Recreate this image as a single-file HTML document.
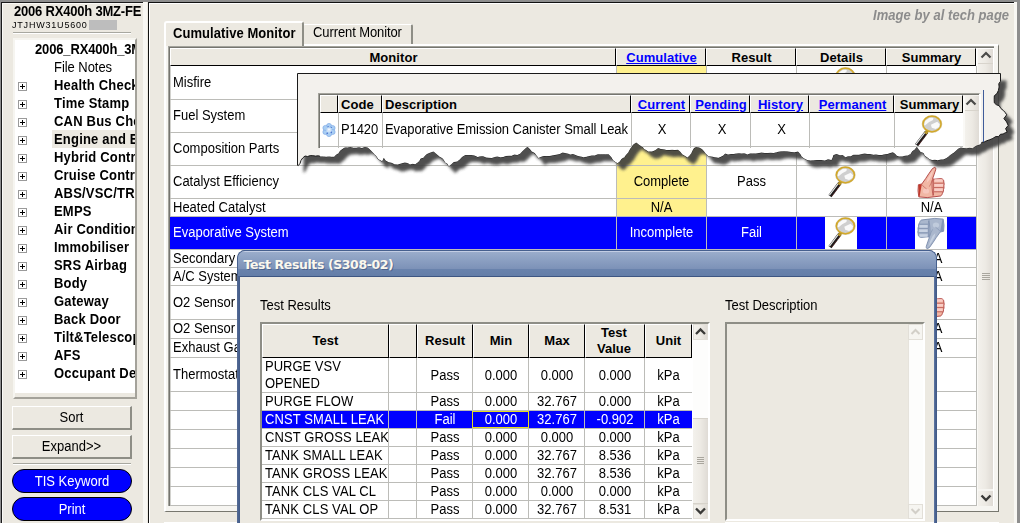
<!DOCTYPE html>
<html><head><meta charset="utf-8"><title>Test Results</title>
<style>
html,body{margin:0;padding:0;}
body{width:1020px;height:523px;overflow:hidden;position:relative;background:#ECE9E1;font-family:"Liberation Sans",sans-serif;font-size:13px;color:#000;}
div,span{box-sizing:border-box;}
.abs{position:absolute;}
svg{position:absolute;overflow:visible;}
.t{position:absolute;white-space:nowrap;line-height:15px;transform:scaleY(1.08);transform-origin:50% 80%;}
.s{display:inline-block;transform:scaleY(1.08);transform-origin:50% 80%;}
.hd .s{transform:none;}
.b{font-weight:bold;}
.w{color:#fff;}
.lnk{color:#0000FF;text-decoration:underline;font-weight:bold;}
.btn{position:absolute;background:#ECE9E1;border-top:1px solid #fff;border-left:1px solid #fff;border-right:2px solid #8E8E86;border-bottom:2px solid #8E8E86;text-align:center;line-height:21px;font-size:13px;}
.pill{position:absolute;background:#0000FF;border:1px solid #000;border-radius:13px;color:#fff;text-align:center;line-height:22px;padding-top:1px;font-size:13px;}
.hd{position:absolute;background:#ECE9E1;border-top:1px solid #fff;border-left:1px solid #fff;border-right:1px solid #000;border-bottom:1px solid #000;text-align:center;font-weight:bold;font-size:13px;line-height:15px;white-space:nowrap;overflow:hidden;letter-spacing:0.05px;}
.sb{position:absolute;background:linear-gradient(90deg,#F3F1EC 0%,#EDEAE4 50%,#DFDBD5 100%);}
</style></head><body>
<div class="abs" style="left:0px;top:0px;width:1020px;height:2px;background:#8E8E8E;"></div>
<div class="abs" style="left:0px;top:2px;width:1px;height:521px;background:#8E8E8E;"></div>
<div class="abs" style="left:1017px;top:0px;width:3px;height:523px;background:#8E8E8E;"></div>
<div class="abs" style="left:1px;top:2px;width:142px;height:521px;border-top:1px solid #1A1A1A;border-left:1px solid #1A1A1A;"></div>
<div class="abs" style="left:2px;top:3px;width:141px;height:520px;border-top:1px solid #FAF9F6;border-left:1px solid #FAF9F6;"></div>
<div class="abs" style="left:0;top:0;width:142px;height:523px;overflow:hidden;">
<div class="t" style="left:14px;top:4px;font-weight:bold;font-size:13px;line-height:16px;letter-spacing:-0.2px;">2006 RX400h 3MZ-FE</div>
<div class="t" style="left:12px;top:20px;font-size:9px;line-height:11px;letter-spacing:0.8px;">JTJHW31U5600</div>
<div class="abs" style="left:89px;top:20px;width:28px;height:10px;background:#BDBDBD;"></div>
<div class="abs" style="left:13px;top:32px;width:118px;height:1px;background:#A8A8A0;"></div>
<div class="abs" style="left:13px;top:33px;width:118px;height:1px;background:#fff;"></div>
<div class="abs" style="left:13px;top:38px;width:124px;height:361px;border-top:2px solid #F6F5F0;border-left:2px solid #F6F5F0;border-right:2px solid #A4A29A;border-bottom:2px solid #A4A29A;"></div>
<div class="abs" style="left:15px;top:40px;width:120px;height:353px;background:#fff;"></div>
<div class="abs" style="left:15px;top:40px;width:120px;height:353px;overflow:hidden;">
<div class="t" style="left:20px;top:2px;font-weight:bold;letter-spacing:-0.15px;">2006_RX400h_3MZ</div>
<div class="t" style="left:39px;top:20px;letter-spacing:-0.05px;">File Notes</div>
<div class="t" style="left:39px;top:38px;font-weight:bold;letter-spacing:0.2px;">Health Check</div>
<svg style="left:3px;top:42px;" width="9" height="9" viewBox="0 0 9 9"><rect x="0.5" y="0.5" width="8" height="8" fill="#fff" stroke="#9A9A9A"/><path d="M2 4.5H7M4.5 2V7" stroke="#000" stroke-width="1"/></svg>
<div class="t" style="left:39px;top:56px;font-weight:bold;letter-spacing:0.2px;">Time Stamp</div>
<svg style="left:3px;top:60px;" width="9" height="9" viewBox="0 0 9 9"><rect x="0.5" y="0.5" width="8" height="8" fill="#fff" stroke="#9A9A9A"/><path d="M2 4.5H7M4.5 2V7" stroke="#000" stroke-width="1"/></svg>
<div class="t" style="left:39px;top:74px;font-weight:bold;letter-spacing:0.2px;">CAN Bus Check</div>
<svg style="left:3px;top:78px;" width="9" height="9" viewBox="0 0 9 9"><rect x="0.5" y="0.5" width="8" height="8" fill="#fff" stroke="#9A9A9A"/><path d="M2 4.5H7M4.5 2V7" stroke="#000" stroke-width="1"/></svg>
<div class="abs" style="left:37px;top:90px;width:90px;height:18px;background:#ECE9E1;"></div>
<div class="t" style="left:39px;top:92px;font-weight:bold;letter-spacing:0.2px;">Engine and ECT</div>
<svg style="left:3px;top:96px;" width="9" height="9" viewBox="0 0 9 9"><rect x="0.5" y="0.5" width="8" height="8" fill="#fff" stroke="#9A9A9A"/><path d="M2 4.5H7M4.5 2V7" stroke="#000" stroke-width="1"/></svg>
<div class="t" style="left:39px;top:110px;font-weight:bold;letter-spacing:0.2px;">Hybrid Control</div>
<svg style="left:3px;top:114px;" width="9" height="9" viewBox="0 0 9 9"><rect x="0.5" y="0.5" width="8" height="8" fill="#fff" stroke="#9A9A9A"/><path d="M2 4.5H7M4.5 2V7" stroke="#000" stroke-width="1"/></svg>
<div class="t" style="left:39px;top:128px;font-weight:bold;letter-spacing:0.2px;">Cruise Control</div>
<svg style="left:3px;top:132px;" width="9" height="9" viewBox="0 0 9 9"><rect x="0.5" y="0.5" width="8" height="8" fill="#fff" stroke="#9A9A9A"/><path d="M2 4.5H7M4.5 2V7" stroke="#000" stroke-width="1"/></svg>
<div class="t" style="left:39px;top:146px;font-weight:bold;letter-spacing:0.2px;">ABS/VSC/TRAC</div>
<svg style="left:3px;top:150px;" width="9" height="9" viewBox="0 0 9 9"><rect x="0.5" y="0.5" width="8" height="8" fill="#fff" stroke="#9A9A9A"/><path d="M2 4.5H7M4.5 2V7" stroke="#000" stroke-width="1"/></svg>
<div class="t" style="left:39px;top:164px;font-weight:bold;letter-spacing:0.2px;">EMPS</div>
<svg style="left:3px;top:168px;" width="9" height="9" viewBox="0 0 9 9"><rect x="0.5" y="0.5" width="8" height="8" fill="#fff" stroke="#9A9A9A"/><path d="M2 4.5H7M4.5 2V7" stroke="#000" stroke-width="1"/></svg>
<div class="t" style="left:39px;top:182px;font-weight:bold;letter-spacing:0.2px;">Air Conditioner</div>
<svg style="left:3px;top:186px;" width="9" height="9" viewBox="0 0 9 9"><rect x="0.5" y="0.5" width="8" height="8" fill="#fff" stroke="#9A9A9A"/><path d="M2 4.5H7M4.5 2V7" stroke="#000" stroke-width="1"/></svg>
<div class="t" style="left:39px;top:200px;font-weight:bold;letter-spacing:0.2px;">Immobiliser</div>
<svg style="left:3px;top:204px;" width="9" height="9" viewBox="0 0 9 9"><rect x="0.5" y="0.5" width="8" height="8" fill="#fff" stroke="#9A9A9A"/><path d="M2 4.5H7M4.5 2V7" stroke="#000" stroke-width="1"/></svg>
<div class="t" style="left:39px;top:218px;font-weight:bold;letter-spacing:0.2px;">SRS Airbag</div>
<svg style="left:3px;top:222px;" width="9" height="9" viewBox="0 0 9 9"><rect x="0.5" y="0.5" width="8" height="8" fill="#fff" stroke="#9A9A9A"/><path d="M2 4.5H7M4.5 2V7" stroke="#000" stroke-width="1"/></svg>
<div class="t" style="left:39px;top:236px;font-weight:bold;letter-spacing:0.2px;">Body</div>
<svg style="left:3px;top:240px;" width="9" height="9" viewBox="0 0 9 9"><rect x="0.5" y="0.5" width="8" height="8" fill="#fff" stroke="#9A9A9A"/><path d="M2 4.5H7M4.5 2V7" stroke="#000" stroke-width="1"/></svg>
<div class="t" style="left:39px;top:254px;font-weight:bold;letter-spacing:0.2px;">Gateway</div>
<svg style="left:3px;top:258px;" width="9" height="9" viewBox="0 0 9 9"><rect x="0.5" y="0.5" width="8" height="8" fill="#fff" stroke="#9A9A9A"/><path d="M2 4.5H7M4.5 2V7" stroke="#000" stroke-width="1"/></svg>
<div class="t" style="left:39px;top:272px;font-weight:bold;letter-spacing:0.2px;">Back Door</div>
<svg style="left:3px;top:276px;" width="9" height="9" viewBox="0 0 9 9"><rect x="0.5" y="0.5" width="8" height="8" fill="#fff" stroke="#9A9A9A"/><path d="M2 4.5H7M4.5 2V7" stroke="#000" stroke-width="1"/></svg>
<div class="t" style="left:39px;top:290px;font-weight:bold;letter-spacing:0.2px;">Tilt&amp;Telescopic</div>
<svg style="left:3px;top:294px;" width="9" height="9" viewBox="0 0 9 9"><rect x="0.5" y="0.5" width="8" height="8" fill="#fff" stroke="#9A9A9A"/><path d="M2 4.5H7M4.5 2V7" stroke="#000" stroke-width="1"/></svg>
<div class="t" style="left:39px;top:308px;font-weight:bold;letter-spacing:0.2px;">AFS</div>
<svg style="left:3px;top:312px;" width="9" height="9" viewBox="0 0 9 9"><rect x="0.5" y="0.5" width="8" height="8" fill="#fff" stroke="#9A9A9A"/><path d="M2 4.5H7M4.5 2V7" stroke="#000" stroke-width="1"/></svg>
<div class="t" style="left:39px;top:326px;font-weight:bold;letter-spacing:0.2px;">Occupant Detection</div>
<svg style="left:3px;top:330px;" width="9" height="9" viewBox="0 0 9 9"><rect x="0.5" y="0.5" width="8" height="8" fill="#fff" stroke="#9A9A9A"/><path d="M2 4.5H7M4.5 2V7" stroke="#000" stroke-width="1"/></svg>
</div>
<div class="btn" style="left:12px;top:406px;width:120px;height:24px;"><span class="s">Sort</span></div>
<div class="btn" style="left:12px;top:435px;width:120px;height:24px;"><span class="s">Expand&gt;&gt;</span></div>
<div class="abs" style="left:13px;top:463px;width:118px;height:1px;background:#A8A8A0;"></div>
<div class="abs" style="left:13px;top:464px;width:118px;height:1px;background:#fff;"></div>
<div class="pill" style="left:12px;top:469px;width:120px;height:24px;"><span class="s">TIS Keyword</span></div>
<div class="pill" style="left:12px;top:497px;width:120px;height:24px;"><span class="s">Print</span></div>
</div>
<div class="abs" style="left:143px;top:2px;width:4px;height:521px;background:#F8F7F3;"></div>
<div class="abs" style="left:148px;top:2px;width:866px;height:521px;border-top:1px solid #111;border-left:1px solid #111;"></div>
<div class="abs" style="left:149px;top:3px;width:865px;height:520px;border-top:1px solid #fff;border-left:1px solid #fff;"></div>
<div class="abs" style="left:1014px;top:2px;width:3px;height:521px;background:#F8F7F3;"></div>
<div class="t" style="left:873px;top:8px;font-weight:bold;font-style:italic;color:#8C8C8C;letter-spacing:0.05px;">Image by al tech page</div>
<div class="abs" style="left:164px;top:44px;width:835px;height:468px;background:#F6F5F1;border-left:2px solid #fff;border-top:2px solid #fff;border-right:1px solid #77776F;border-bottom:1px solid #77776F;"></div>
<div class="abs" style="left:164px;top:522px;width:835px;height:1px;background:#fff;"></div>
<div class="abs" style="left:303px;top:24px;width:110px;height:20px;border-left:1px solid #fff;border-top:1px solid #fff;border-right:2px solid #8E8E86;border-radius:2px 2px 0 0;"></div>
<div class="t" style="left:313px;top:25px;letter-spacing:-0.1px;">Current Monitor</div>
<div class="abs" style="left:164px;top:21px;width:140px;height:25px;background:#ECE9E1;border-left:2px solid #fff;border-top:2px solid #fff;border-right:2px solid #8E8E86;border-radius:3px 3px 0 0;"></div>
<div class="t" style="left:173px;top:26px;font-weight:bold;letter-spacing:0.07px;">Cumulative Monitor</div>
<div class="abs" style="left:168px;top:46px;width:826px;height:460px;background:#fff;border-top:1px solid #A3A39C;border-left:1px solid #A3A39C;"></div>
<div class="abs" style="left:169px;top:47px;width:825px;height:459px;border-top:1px solid #75756F;border-left:1px solid #75756F;"></div>
<div class="hd" style="left:170px;top:48px;width:446px;height:18px;padding-left:1px;line-height:18px;"><span class="s">Monitor</span></div>
<div class="hd" style="left:616px;top:48px;width:90px;height:18px;padding-left:1px;line-height:18px;"><span class="s"><span class="lnk">Cumulative</span></span></div>
<div class="hd" style="left:706px;top:48px;width:90px;height:18px;padding-left:1px;line-height:18px;"><span class="s">Result</span></div>
<div class="hd" style="left:796px;top:48px;width:90px;height:18px;padding-left:1px;line-height:18px;"><span class="s">Details</span></div>
<div class="hd" style="left:886px;top:48px;width:90px;height:18px;padding-left:1px;line-height:18px;"><span class="s">Summary</span></div>
<div class="abs" style="left:170px;top:66px;width:1px;height:440px;background:#D2D2CE;"></div>
<div class="abs" style="left:617px;top:66px;width:89px;height:150px;background:#FFF18E;"></div>
<div class="abs" style="left:170px;top:217px;width:806px;height:32px;background:#0000FF;"></div>
<div class="t" style="left:173px;top:75px;">Misfire</div>
<div class="abs" style="left:170px;top:99px;width:806px;height:1px;background:#BCBCB8;"></div>
<div class="t" style="left:173px;top:108px;">Fuel System</div>
<div class="abs" style="left:170px;top:132px;width:806px;height:1px;background:#BCBCB8;"></div>
<div class="t" style="left:173px;top:141px;">Composition Parts</div>
<div class="abs" style="left:170px;top:165px;width:806px;height:1px;background:#BCBCB8;"></div>
<div class="t" style="left:173px;top:174px;">Catalyst Efficiency</div>
<div class="abs" style="left:170px;top:198px;width:806px;height:1px;background:#BCBCB8;"></div>
<div class="t" style="left:173px;top:200px;">Heated Catalyst</div>
<div class="abs" style="left:170px;top:216px;width:806px;height:1px;background:#BCBCB8;"></div>
<div class="t" style="left:173px;top:225px;color:#fff;">Evaporative System</div>
<div class="abs" style="left:170px;top:249px;width:806px;height:1px;background:#BCBCB8;"></div>
<div class="t" style="left:173px;top:251px;">Secondary Air</div>
<div class="abs" style="left:170px;top:267px;width:806px;height:1px;background:#BCBCB8;"></div>
<div class="t" style="left:173px;top:269px;">A/C System</div>
<div class="abs" style="left:170px;top:285px;width:806px;height:1px;background:#BCBCB8;"></div>
<div class="t" style="left:173px;top:295px;">O2 Sensor</div>
<div class="abs" style="left:170px;top:319px;width:806px;height:1px;background:#BCBCB8;"></div>
<div class="t" style="left:173px;top:321px;">O2 Sensor Heater</div>
<div class="abs" style="left:170px;top:338px;width:806px;height:1px;background:#BCBCB8;"></div>
<div class="t" style="left:173px;top:340px;">Exhaust Gas</div>
<div class="abs" style="left:170px;top:357px;width:806px;height:1px;background:#BCBCB8;"></div>
<div class="t" style="left:173px;top:367px;">Thermostat</div>
<div class="abs" style="left:170px;top:391px;width:806px;height:1px;background:#BCBCB8;"></div>
<div class="abs" style="left:170px;top:410px;width:806px;height:1px;background:#BCBCB8;"></div>
<div class="abs" style="left:170px;top:429px;width:806px;height:1px;background:#BCBCB8;"></div>
<div class="abs" style="left:170px;top:448px;width:806px;height:1px;background:#BCBCB8;"></div>
<div class="abs" style="left:170px;top:467px;width:806px;height:1px;background:#BCBCB8;"></div>
<div class="abs" style="left:170px;top:486px;width:806px;height:1px;background:#BCBCB8;"></div>
<div class="abs" style="left:170px;top:505px;width:806px;height:1px;background:#BCBCB8;"></div>
<div class="abs" style="left:616px;top:66px;width:1px;height:440px;background:#BCBCB8;"></div>
<div class="abs" style="left:706px;top:66px;width:1px;height:440px;background:#BCBCB8;"></div>
<div class="abs" style="left:796px;top:66px;width:1px;height:440px;background:#BCBCB8;"></div>
<div class="abs" style="left:886px;top:66px;width:1px;height:440px;background:#BCBCB8;"></div>
<div class="t" style="left:617px;top:174px;width:89px;text-align:center;">Complete</div>
<div class="t" style="left:707px;top:174px;width:89px;text-align:center;">Pass</div>
<div class="t" style="left:617px;top:200px;width:89px;text-align:center;">N/A</div>
<div class="t" style="left:887px;top:200px;width:89px;text-align:center;">N/A</div>
<div class="t" style="left:617px;top:225px;width:89px;text-align:center;color:#fff;">Incomplete</div>
<div class="t" style="left:707px;top:225px;width:89px;text-align:center;color:#fff;">Fail</div>
<div class="t" style="left:887px;top:251px;width:89px;text-align:center;">N/A</div>
<div class="t" style="left:887px;top:269px;width:89px;text-align:center;">N/A</div>
<div class="t" style="left:887px;top:321px;width:89px;text-align:center;">N/A</div>
<div class="t" style="left:887px;top:340px;width:89px;text-align:center;">N/A</div>
<div class="abs" style="left:825px;top:217px;width:32px;height:32px;background:#fff;"></div>
<div class="abs" style="left:915px;top:217px;width:32px;height:32px;background:#fff;"></div>
<svg style="left:0;top:0;" width="1020" height="523" viewBox="0 0 1020 523"><g transform="translate(845.4,175)"><line x1="-5.4" y1="7.8" x2="-15.4" y2="21.2" stroke="#1A1A1A" stroke-width="3.8" stroke-linecap="butt"/><line x1="-6.6" y1="7.8" x2="-16" y2="20.2" stroke="#E8E8E8" stroke-width="1.1"/><line x1="-5" y1="9.6" x2="-13.6" y2="21.2" stroke="#8C2A2A" stroke-width="0.8" stroke-dasharray="1 1.2"/><line x1="-4.4" y1="6.6" x2="-6.6" y2="9.6" stroke="#B8962A" stroke-width="3.2"/><ellipse cx="0" cy="0" rx="9" ry="7.7" fill="#CFCFCF" stroke="#D6AC2C" stroke-width="1.5"/><ellipse cx="0" cy="0" rx="9.8" ry="8.5" fill="none" stroke="#B08A1C" stroke-width="0.5" opacity="0.8"/><polygon points="-7.9,1.3 -7,-3 -2.4,-6.2 1.4,-6 1,-4 -3.2,-1.8 -6.8,1.3" fill="#FAFAFA"/><polygon points="-1.1,0.7 5.2,-2.2 7.7,0.3 7,3 3.7,5 -0.2,3.8" fill="#FAFAFA"/></g></svg>
<svg style="left:0;top:0;" width="1020" height="523" viewBox="0 0 1020 523"><g transform="translate(845.4,226)"><line x1="-5.4" y1="7.8" x2="-15.4" y2="21.2" stroke="#1A1A1A" stroke-width="3.8" stroke-linecap="butt"/><line x1="-6.6" y1="7.8" x2="-16" y2="20.2" stroke="#E8E8E8" stroke-width="1.1"/><line x1="-5" y1="9.6" x2="-13.6" y2="21.2" stroke="#8C2A2A" stroke-width="0.8" stroke-dasharray="1 1.2"/><line x1="-4.4" y1="6.6" x2="-6.6" y2="9.6" stroke="#B8962A" stroke-width="3.2"/><ellipse cx="0" cy="0" rx="9" ry="7.7" fill="#CFCFCF" stroke="#D6AC2C" stroke-width="1.5"/><ellipse cx="0" cy="0" rx="9.8" ry="8.5" fill="none" stroke="#B08A1C" stroke-width="0.5" opacity="0.8"/><polygon points="-7.9,1.3 -7,-3 -2.4,-6.2 1.4,-6 1,-4 -3.2,-1.8 -6.8,1.3" fill="#FAFAFA"/><polygon points="-1.1,0.7 5.2,-2.2 7.7,0.3 7,3 3.7,5 -0.2,3.8" fill="#FAFAFA"/></g></svg>
<svg style="left:0;top:0;" width="1020" height="523" viewBox="0 0 1020 523"><g transform="translate(845.4,76)"><line x1="-5.4" y1="7.8" x2="-15.4" y2="21.2" stroke="#1A1A1A" stroke-width="3.8" stroke-linecap="butt"/><line x1="-6.6" y1="7.8" x2="-16" y2="20.2" stroke="#E8E8E8" stroke-width="1.1"/><line x1="-5" y1="9.6" x2="-13.6" y2="21.2" stroke="#8C2A2A" stroke-width="0.8" stroke-dasharray="1 1.2"/><line x1="-4.4" y1="6.6" x2="-6.6" y2="9.6" stroke="#B8962A" stroke-width="3.2"/><ellipse cx="0" cy="0" rx="9" ry="7.7" fill="#CFCFCF" stroke="#D6AC2C" stroke-width="1.5"/><ellipse cx="0" cy="0" rx="9.8" ry="8.5" fill="none" stroke="#B08A1C" stroke-width="0.5" opacity="0.8"/><polygon points="-7.9,1.3 -7,-3 -2.4,-6.2 1.4,-6 1,-4 -3.2,-1.8 -6.8,1.3" fill="#FAFAFA"/><polygon points="-1.1,0.7 5.2,-2.2 7.7,0.3 7,3 3.7,5 -0.2,3.8" fill="#FAFAFA"/></g></svg>
<svg style="left:918px;top:167px;" width="26" height="31" viewBox="0 0 26 31"><g><path d="M16.8 0.3 C18 0.8 17.9 2 17.6 3 L16 7.8 L14.6 11.6 L16 12.2 L22.8 11.6 C25 11.8 26 13.2 25.8 15 C26.3 16.4 26.3 17.6 25.9 18.8 C26.2 20.2 26 21.6 25.5 22.6 C25.6 24.2 25.2 25.4 24.4 26.4 C24 27.8 23.4 28.6 22.6 29 L15.3 29.9 L9.2 30.6 L0.8 29.9 L0 23.7 L0.4 17.7 L3.8 17 L7.7 11.5 L10.7 6.9 L14.5 1.5 Z" fill="#F1B7A4" stroke="#A3282A" stroke-width="0.8" stroke-linejoin="round"/><path d="M0.6 18 L3.8 17.2 L1.6 29.6 L0.8 29.6 Z" fill="#C0392B"/><path d="M15.6 2.2 L12 7.6 L9.4 12 L8.6 16 L11.4 13 L13.4 9 Z" fill="#FACDC6" opacity="0.85"/><ellipse cx="8" cy="24" rx="3.2" ry="2.6" fill="#FACDC6" opacity="0.7"/><path d="M16.5 13.5 H24.5 M16.5 18.2 H25 M16.5 22.6 H24.6" stroke="#FACDC6" stroke-width="2.6" fill="none"/><path d="M16 16.2 H25.6 M16 20.6 H25.6 M16 24.8 H24.8 M14.8 12.2 C13.6 15 13.8 22 15.2 29.4 M15.4 12.4 L15.4 28" stroke="#A3282A" stroke-width="0.7" fill="none" opacity="0.85"/><path d="M3.8 17.4 C5.4 19.6 7 21 8.6 21.8 M14.4 12.4 C13.6 15 12.6 17.6 11.4 19.6" stroke="#A3282A" stroke-width="0.6" fill="none" opacity="0.7"/></g></svg>
<svg style="left:918px;top:218px;" width="26" height="31" viewBox="0 0 26 31"><g transform="translate(26,31) rotate(180)"><path d="M16.8 0.3 C18 0.8 17.9 2 17.6 3 L16 7.8 L14.6 11.6 L16 12.2 L22.8 11.6 C25 11.8 26 13.2 25.8 15 C26.3 16.4 26.3 17.6 25.9 18.8 C26.2 20.2 26 21.6 25.5 22.6 C25.6 24.2 25.2 25.4 24.4 26.4 C24 27.8 23.4 28.6 22.6 29 L15.3 29.9 L9.2 30.6 L0.8 29.9 L0 23.7 L0.4 17.7 L3.8 17 L7.7 11.5 L10.7 6.9 L14.5 1.5 Z" fill="#AAB7CD" stroke="#6F82A4" stroke-width="0.8" stroke-linejoin="round"/><path d="M0.6 18 L3.8 17.2 L1.6 29.6 L0.8 29.6 Z" fill="#8497B6"/><path d="M15.6 2.2 L12 7.6 L9.4 12 L8.6 16 L11.4 13 L13.4 9 Z" fill="#C9D3E3" opacity="0.85"/><ellipse cx="8" cy="24" rx="3.2" ry="2.6" fill="#C9D3E3" opacity="0.7"/><path d="M16.5 13.5 H24.5 M16.5 18.2 H25 M16.5 22.6 H24.6" stroke="#C9D3E3" stroke-width="2.6" fill="none"/><path d="M16 16.2 H25.6 M16 20.6 H25.6 M16 24.8 H24.8 M14.8 12.2 C13.6 15 13.8 22 15.2 29.4 M15.4 12.4 L15.4 28" stroke="#6F82A4" stroke-width="0.7" fill="none" opacity="0.85"/><path d="M3.8 17.4 C5.4 19.6 7 21 8.6 21.8 M14.4 12.4 C13.6 15 12.6 17.6 11.4 19.6" stroke="#6F82A4" stroke-width="0.6" fill="none" opacity="0.7"/></g></svg>
<svg style="left:918px;top:287px;" width="26" height="31" viewBox="0 0 26 31"><g><path d="M16.8 0.3 C18 0.8 17.9 2 17.6 3 L16 7.8 L14.6 11.6 L16 12.2 L22.8 11.6 C25 11.8 26 13.2 25.8 15 C26.3 16.4 26.3 17.6 25.9 18.8 C26.2 20.2 26 21.6 25.5 22.6 C25.6 24.2 25.2 25.4 24.4 26.4 C24 27.8 23.4 28.6 22.6 29 L15.3 29.9 L9.2 30.6 L0.8 29.9 L0 23.7 L0.4 17.7 L3.8 17 L7.7 11.5 L10.7 6.9 L14.5 1.5 Z" fill="#F1B7A4" stroke="#A3282A" stroke-width="0.8" stroke-linejoin="round"/><path d="M0.6 18 L3.8 17.2 L1.6 29.6 L0.8 29.6 Z" fill="#C0392B"/><path d="M15.6 2.2 L12 7.6 L9.4 12 L8.6 16 L11.4 13 L13.4 9 Z" fill="#FACDC6" opacity="0.85"/><ellipse cx="8" cy="24" rx="3.2" ry="2.6" fill="#FACDC6" opacity="0.7"/><path d="M16.5 13.5 H24.5 M16.5 18.2 H25 M16.5 22.6 H24.6" stroke="#FACDC6" stroke-width="2.6" fill="none"/><path d="M16 16.2 H25.6 M16 20.6 H25.6 M16 24.8 H24.8 M14.8 12.2 C13.6 15 13.8 22 15.2 29.4 M15.4 12.4 L15.4 28" stroke="#A3282A" stroke-width="0.7" fill="none" opacity="0.85"/><path d="M3.8 17.4 C5.4 19.6 7 21 8.6 21.8 M14.4 12.4 C13.6 15 12.6 17.6 11.4 19.6" stroke="#A3282A" stroke-width="0.6" fill="none" opacity="0.7"/></g></svg>
<div class="abs" style="left:976px;top:66px;width:1px;height:440px;background:#BCBCB8;"></div>
<div class="abs" style="left:977px;top:49px;width:1px;height:457px;background:#FAF9F6;"></div>
<div class="sb" style="left:978px;top:49px;width:15px;height:457px;"></div>
<div class="abs" style="left:978px;top:63px;width:15px;height:1px;background:#D8D4CC;"></div>
<div class="abs" style="left:978px;top:489px;width:15px;height:2px;background:#F6F5F1;"></div>
<svg style="left:978.5px;top:49px;" width="14" height="462" viewBox="0 0 14 462"><path d="M2.5 8.5 L7 4 L11.5 8.5" fill="none" stroke="#4A4A48" stroke-width="2.2"/><path d="M2.5 446.5 L7 451 L11.5 446.5" fill="none" stroke="#3A3A38" stroke-width="2.4"/><path d="M3 224.5H11M3 226.5H11M3 228.5H11M3 230.5H11" stroke="#A9A69E" stroke-width="1"/></svg>
<svg style="left:0;top:0;" width="1020" height="523" viewBox="0 0 1020 523"><defs><filter id="sh" x="-5%" y="-20%" width="110%" height="150%"><feGaussianBlur stdDeviation="1.4"/></filter><clipPath id="tc"><polygon points="297.5,73.5 1000.5,73.5 1000.5,81.3 998.8,83.8 999.1,87.0 998.4,90.5 996.9,93.6 994.3,95.8 994.2,99.3 994.3,102.8 996.2,104.6 999.3,105.9 1000.9,108.5 1003.2,110.3 1005.1,112.4 1006.7,114.8 1003.9,118.6 1006.6,121.9 1008.2,125.4 1005.6,128.6 1007.2,132.1 1005.4,132.7 1003.1,134.0 1000.4,134.3 998.6,136.6 995.7,136.6 992.9,138.4 989.9,139.7 986.9,140.7 984.5,141.8 981.8,142.4 979.9,144.5 977.2,145.3 974.8,146.5 972.7,148.2 969.6,147.7 966.6,148.2 963.6,147.9 960.7,147.4 958.1,148.7 955.9,150.8 953.6,152.8 950.9,154.4 948.5,156.4 946.1,158.3 943.1,159.5 940.6,159.6 937.8,160.3 935.0,159.8 932.2,159.9 929.4,159.3 927.5,157.5 924.9,155.8 923.5,152.9 920.4,151.7 918.6,149.2 916.8,146.7 914.7,149.5 912.2,151.3 910.5,153.9 907.7,155.4 904.9,155.7 902.1,156.5 899.1,156.5 896.9,155.8 895.1,153.7 892.9,152.3 890.1,153.1 887.4,154.1 884.6,154.3 881.8,155.0 879.1,155.1 876.2,154.4 873.2,154.7 870.4,153.9 867.6,154.0 864.7,153.6 861.8,153.9 859.0,154.8 856.1,154.7 853.3,154.8 850.8,156.3 848.0,156.2 845.4,157.2 842.7,154.9 839.9,155.2 836.6,154.1 833.4,155.1 832.7,157.3 831.5,160.0 828.1,159.3 824.8,160.5 821.6,160.0 818.9,160.1 816.1,159.9 813.5,160.2 810.7,160.5 807.2,159.9 803.8,158.3 801.6,156.3 800.1,153.7 798.1,151.6 794.5,152.3 791.4,151.9 788.3,151.5 785.3,151.2 782.4,151.2 779.4,151.4 776.5,152.2 773.6,152.9 770.6,152.7 767.6,153.1 764.7,153.0 761.7,152.5 758.8,153.1 755.9,153.5 752.9,153.5 750.0,153.5 747.3,154.5 744.5,153.2 741.8,153.4 739.0,153.2 736.3,153.4 733.5,154.0 730.8,154.0 728.0,154.4 725.3,153.6 723.2,155.6 720.9,156.8 718.4,157.8 714.9,157.3 711.7,156.4 708.4,156.3 705.9,153.7 704.0,151.2 701.9,148.9 699.2,147.5 696.0,146.9 694.0,148.1 692.5,150.6 691.3,153.2 689.5,155.4 687.6,157.5 684.8,155.8 682.2,154.3 680.4,151.7 678.0,149.7 674.8,150.1 672.1,149.8 669.2,150.1 666.5,149.9 663.7,149.2 660.9,149.1 658.2,148.0 655.1,150.2 652.0,151.6 648.3,151.5 646.6,150.3 644.2,148.9 642.6,146.7 640.1,145.5 636.2,142.4 633.3,144.5 631.4,147.1 629.6,149.7 628.2,152.5 626.1,154.8 624.3,157.2 621.6,158.8 619.9,161.3 617.6,163.2 615.5,161.9 613.2,160.3 611.2,157.0 608.7,154.2 605.6,154.2 602.9,154.2 600.2,154.2 597.6,154.3 594.8,155.5 592.0,155.4 589.2,156.0 586.4,156.8 583.6,157.2 580.8,156.4 578.1,156.0 575.6,154.9 573.0,154.0 570.3,154.4 567.7,153.4 565.1,152.9 562.5,152.6 559.8,154.0 557.2,154.6 554.5,155.1 551.9,155.6 549.2,156.1 546.5,155.9 543.7,156.1 541.1,156.8 538.5,157.9 536.6,155.5 534.8,153.1 531.9,151.6 529.9,149.1 527.5,146.8 524.4,149.2 522.1,151.4 520.0,153.8 517.3,154.9 514.3,154.6 511.6,155.8 508.6,155.8 505.8,156.1 503.1,157.1 500.3,157.2 497.4,156.5 494.6,156.9 491.8,157.9 488.9,157.8 486.1,157.6 483.3,156.3 480.5,156.2 477.6,157.0 474.6,155.6 471.6,154.9 468.4,154.9 465.3,154.9 462.3,156.8 459.7,159.5 457.2,161.5 453.7,162.1 451.3,164.2 448.8,166.2 447.5,163.8 445.2,162.4 443.9,160.0 442.1,158.1 439.7,156.8 437.7,155.0 435.7,153.2 433.5,151.5 430.3,152.4 426.9,154.1 425.0,155.7 423.3,157.7 420.6,158.6 419.3,161.0 417.3,162.7 415.2,164.3 412.6,163.8 410.0,164.5 407.6,162.9 404.7,162.6 401.1,163.5 397.6,164.4 394.5,164.2 391.7,162.8 388.7,162.3 385.7,160.6 383.8,157.8 382.2,161.2 378.2,159.1 376.7,156.6 374.7,154.4 372.7,152.3 370.3,149.8 367.7,147.5 364.8,147.1 361.9,148.0 359.1,147.3 356.2,147.7 353.3,147.7 350.4,147.0 347.6,147.5 344.7,147.5 342.3,149.1 340.1,150.8 338.4,153.2 336.1,154.8 334.1,156.8 331.5,156.7 328.8,156.4 326.2,156.7 323.5,156.5 320.9,156.5 318.2,155.8 315.6,156.1 312.9,155.7 310.3,155.6 307.6,156.5 305.0,156.0 302.7,158.0 301.0,160.4 300.1,163.3 298.3,165.6 297.5,165.3"/></clipPath></defs><polygon points="297.5,73.5 1000.5,73.5 1000.5,81.3 998.8,83.8 999.1,87.0 998.4,90.5 996.9,93.6 994.3,95.8 994.2,99.3 994.3,102.8 996.2,104.6 999.3,105.9 1000.9,108.5 1003.2,110.3 1005.1,112.4 1006.7,114.8 1003.9,118.6 1006.6,121.9 1008.2,125.4 1005.6,128.6 1007.2,132.1 1005.4,132.7 1003.1,134.0 1000.4,134.3 998.6,136.6 995.7,136.6 992.9,138.4 989.9,139.7 986.9,140.7 984.5,141.8 981.8,142.4 979.9,144.5 977.2,145.3 974.8,146.5 972.7,148.2 969.6,147.7 966.6,148.2 963.6,147.9 960.7,147.4 958.1,148.7 955.9,150.8 953.6,152.8 950.9,154.4 948.5,156.4 946.1,158.3 943.1,159.5 940.6,159.6 937.8,160.3 935.0,159.8 932.2,159.9 929.4,159.3 927.5,157.5 924.9,155.8 923.5,152.9 920.4,151.7 918.6,149.2 916.8,146.7 914.7,149.5 912.2,151.3 910.5,153.9 907.7,155.4 904.9,155.7 902.1,156.5 899.1,156.5 896.9,155.8 895.1,153.7 892.9,152.3 890.1,153.1 887.4,154.1 884.6,154.3 881.8,155.0 879.1,155.1 876.2,154.4 873.2,154.7 870.4,153.9 867.6,154.0 864.7,153.6 861.8,153.9 859.0,154.8 856.1,154.7 853.3,154.8 850.8,156.3 848.0,156.2 845.4,157.2 842.7,154.9 839.9,155.2 836.6,154.1 833.4,155.1 832.7,157.3 831.5,160.0 828.1,159.3 824.8,160.5 821.6,160.0 818.9,160.1 816.1,159.9 813.5,160.2 810.7,160.5 807.2,159.9 803.8,158.3 801.6,156.3 800.1,153.7 798.1,151.6 794.5,152.3 791.4,151.9 788.3,151.5 785.3,151.2 782.4,151.2 779.4,151.4 776.5,152.2 773.6,152.9 770.6,152.7 767.6,153.1 764.7,153.0 761.7,152.5 758.8,153.1 755.9,153.5 752.9,153.5 750.0,153.5 747.3,154.5 744.5,153.2 741.8,153.4 739.0,153.2 736.3,153.4 733.5,154.0 730.8,154.0 728.0,154.4 725.3,153.6 723.2,155.6 720.9,156.8 718.4,157.8 714.9,157.3 711.7,156.4 708.4,156.3 705.9,153.7 704.0,151.2 701.9,148.9 699.2,147.5 696.0,146.9 694.0,148.1 692.5,150.6 691.3,153.2 689.5,155.4 687.6,157.5 684.8,155.8 682.2,154.3 680.4,151.7 678.0,149.7 674.8,150.1 672.1,149.8 669.2,150.1 666.5,149.9 663.7,149.2 660.9,149.1 658.2,148.0 655.1,150.2 652.0,151.6 648.3,151.5 646.6,150.3 644.2,148.9 642.6,146.7 640.1,145.5 636.2,142.4 633.3,144.5 631.4,147.1 629.6,149.7 628.2,152.5 626.1,154.8 624.3,157.2 621.6,158.8 619.9,161.3 617.6,163.2 615.5,161.9 613.2,160.3 611.2,157.0 608.7,154.2 605.6,154.2 602.9,154.2 600.2,154.2 597.6,154.3 594.8,155.5 592.0,155.4 589.2,156.0 586.4,156.8 583.6,157.2 580.8,156.4 578.1,156.0 575.6,154.9 573.0,154.0 570.3,154.4 567.7,153.4 565.1,152.9 562.5,152.6 559.8,154.0 557.2,154.6 554.5,155.1 551.9,155.6 549.2,156.1 546.5,155.9 543.7,156.1 541.1,156.8 538.5,157.9 536.6,155.5 534.8,153.1 531.9,151.6 529.9,149.1 527.5,146.8 524.4,149.2 522.1,151.4 520.0,153.8 517.3,154.9 514.3,154.6 511.6,155.8 508.6,155.8 505.8,156.1 503.1,157.1 500.3,157.2 497.4,156.5 494.6,156.9 491.8,157.9 488.9,157.8 486.1,157.6 483.3,156.3 480.5,156.2 477.6,157.0 474.6,155.6 471.6,154.9 468.4,154.9 465.3,154.9 462.3,156.8 459.7,159.5 457.2,161.5 453.7,162.1 451.3,164.2 448.8,166.2 447.5,163.8 445.2,162.4 443.9,160.0 442.1,158.1 439.7,156.8 437.7,155.0 435.7,153.2 433.5,151.5 430.3,152.4 426.9,154.1 425.0,155.7 423.3,157.7 420.6,158.6 419.3,161.0 417.3,162.7 415.2,164.3 412.6,163.8 410.0,164.5 407.6,162.9 404.7,162.6 401.1,163.5 397.6,164.4 394.5,164.2 391.7,162.8 388.7,162.3 385.7,160.6 383.8,157.8 382.2,161.2 378.2,159.1 376.7,156.6 374.7,154.4 372.7,152.3 370.3,149.8 367.7,147.5 364.8,147.1 361.9,148.0 359.1,147.3 356.2,147.7 353.3,147.7 350.4,147.0 347.6,147.5 344.7,147.5 342.3,149.1 340.1,150.8 338.4,153.2 336.1,154.8 334.1,156.8 331.5,156.7 328.8,156.4 326.2,156.7 323.5,156.5 320.9,156.5 318.2,155.8 315.6,156.1 312.9,155.7 310.3,155.6 307.6,156.5 305.0,156.0 302.7,158.0 301.0,160.4 300.1,163.3 298.3,165.6 297.5,165.3" transform="translate(6,7)" fill="#3E3E3E" opacity="0.9" filter="url(#sh)"/><polygon points="297.5,73.5 1000.5,73.5 1000.5,81.3 998.8,83.8 999.1,87.0 998.4,90.5 996.9,93.6 994.3,95.8 994.2,99.3 994.3,102.8 996.2,104.6 999.3,105.9 1000.9,108.5 1003.2,110.3 1005.1,112.4 1006.7,114.8 1003.9,118.6 1006.6,121.9 1008.2,125.4 1005.6,128.6 1007.2,132.1 1005.4,132.7 1003.1,134.0 1000.4,134.3 998.6,136.6 995.7,136.6 992.9,138.4 989.9,139.7 986.9,140.7 984.5,141.8 981.8,142.4 979.9,144.5 977.2,145.3 974.8,146.5 972.7,148.2 969.6,147.7 966.6,148.2 963.6,147.9 960.7,147.4 958.1,148.7 955.9,150.8 953.6,152.8 950.9,154.4 948.5,156.4 946.1,158.3 943.1,159.5 940.6,159.6 937.8,160.3 935.0,159.8 932.2,159.9 929.4,159.3 927.5,157.5 924.9,155.8 923.5,152.9 920.4,151.7 918.6,149.2 916.8,146.7 914.7,149.5 912.2,151.3 910.5,153.9 907.7,155.4 904.9,155.7 902.1,156.5 899.1,156.5 896.9,155.8 895.1,153.7 892.9,152.3 890.1,153.1 887.4,154.1 884.6,154.3 881.8,155.0 879.1,155.1 876.2,154.4 873.2,154.7 870.4,153.9 867.6,154.0 864.7,153.6 861.8,153.9 859.0,154.8 856.1,154.7 853.3,154.8 850.8,156.3 848.0,156.2 845.4,157.2 842.7,154.9 839.9,155.2 836.6,154.1 833.4,155.1 832.7,157.3 831.5,160.0 828.1,159.3 824.8,160.5 821.6,160.0 818.9,160.1 816.1,159.9 813.5,160.2 810.7,160.5 807.2,159.9 803.8,158.3 801.6,156.3 800.1,153.7 798.1,151.6 794.5,152.3 791.4,151.9 788.3,151.5 785.3,151.2 782.4,151.2 779.4,151.4 776.5,152.2 773.6,152.9 770.6,152.7 767.6,153.1 764.7,153.0 761.7,152.5 758.8,153.1 755.9,153.5 752.9,153.5 750.0,153.5 747.3,154.5 744.5,153.2 741.8,153.4 739.0,153.2 736.3,153.4 733.5,154.0 730.8,154.0 728.0,154.4 725.3,153.6 723.2,155.6 720.9,156.8 718.4,157.8 714.9,157.3 711.7,156.4 708.4,156.3 705.9,153.7 704.0,151.2 701.9,148.9 699.2,147.5 696.0,146.9 694.0,148.1 692.5,150.6 691.3,153.2 689.5,155.4 687.6,157.5 684.8,155.8 682.2,154.3 680.4,151.7 678.0,149.7 674.8,150.1 672.1,149.8 669.2,150.1 666.5,149.9 663.7,149.2 660.9,149.1 658.2,148.0 655.1,150.2 652.0,151.6 648.3,151.5 646.6,150.3 644.2,148.9 642.6,146.7 640.1,145.5 636.2,142.4 633.3,144.5 631.4,147.1 629.6,149.7 628.2,152.5 626.1,154.8 624.3,157.2 621.6,158.8 619.9,161.3 617.6,163.2 615.5,161.9 613.2,160.3 611.2,157.0 608.7,154.2 605.6,154.2 602.9,154.2 600.2,154.2 597.6,154.3 594.8,155.5 592.0,155.4 589.2,156.0 586.4,156.8 583.6,157.2 580.8,156.4 578.1,156.0 575.6,154.9 573.0,154.0 570.3,154.4 567.7,153.4 565.1,152.9 562.5,152.6 559.8,154.0 557.2,154.6 554.5,155.1 551.9,155.6 549.2,156.1 546.5,155.9 543.7,156.1 541.1,156.8 538.5,157.9 536.6,155.5 534.8,153.1 531.9,151.6 529.9,149.1 527.5,146.8 524.4,149.2 522.1,151.4 520.0,153.8 517.3,154.9 514.3,154.6 511.6,155.8 508.6,155.8 505.8,156.1 503.1,157.1 500.3,157.2 497.4,156.5 494.6,156.9 491.8,157.9 488.9,157.8 486.1,157.6 483.3,156.3 480.5,156.2 477.6,157.0 474.6,155.6 471.6,154.9 468.4,154.9 465.3,154.9 462.3,156.8 459.7,159.5 457.2,161.5 453.7,162.1 451.3,164.2 448.8,166.2 447.5,163.8 445.2,162.4 443.9,160.0 442.1,158.1 439.7,156.8 437.7,155.0 435.7,153.2 433.5,151.5 430.3,152.4 426.9,154.1 425.0,155.7 423.3,157.7 420.6,158.6 419.3,161.0 417.3,162.7 415.2,164.3 412.6,163.8 410.0,164.5 407.6,162.9 404.7,162.6 401.1,163.5 397.6,164.4 394.5,164.2 391.7,162.8 388.7,162.3 385.7,160.6 383.8,157.8 382.2,161.2 378.2,159.1 376.7,156.6 374.7,154.4 372.7,152.3 370.3,149.8 367.7,147.5 364.8,147.1 361.9,148.0 359.1,147.3 356.2,147.7 353.3,147.7 350.4,147.0 347.6,147.5 344.7,147.5 342.3,149.1 340.1,150.8 338.4,153.2 336.1,154.8 334.1,156.8 331.5,156.7 328.8,156.4 326.2,156.7 323.5,156.5 320.9,156.5 318.2,155.8 315.6,156.1 312.9,155.7 310.3,155.6 307.6,156.5 305.0,156.0 302.7,158.0 301.0,160.4 300.1,163.3 298.3,165.6 297.5,165.3" fill="#F3F1ED" stroke="#1A1A1A" stroke-width="1" stroke-linejoin="round"/></svg>
<div class="abs" style="left:0;top:0;width:1020px;height:523px;clip-path:polygon(297.5px 73.5px,1000.5px 73.5px,1000.5px 81.3px,998.8px 83.8px,999.1px 87.0px,998.4px 90.5px,996.9px 93.6px,994.3px 95.8px,994.2px 99.3px,994.3px 102.8px,996.2px 104.6px,999.3px 105.9px,1000.9px 108.5px,1003.2px 110.3px,1005.1px 112.4px,1006.7px 114.8px,1003.9px 118.6px,1006.6px 121.9px,1008.2px 125.4px,1005.6px 128.6px,1007.2px 132.1px,1005.4px 132.7px,1003.1px 134.0px,1000.4px 134.3px,998.6px 136.6px,995.7px 136.6px,992.9px 138.4px,989.9px 139.7px,986.9px 140.7px,984.5px 141.8px,981.8px 142.4px,979.9px 144.5px,977.2px 145.3px,974.8px 146.5px,972.7px 148.2px,969.6px 147.7px,966.6px 148.2px,963.6px 147.9px,960.7px 147.4px,958.1px 148.7px,955.9px 150.8px,953.6px 152.8px,950.9px 154.4px,948.5px 156.4px,946.1px 158.3px,943.1px 159.5px,940.6px 159.6px,937.8px 160.3px,935.0px 159.8px,932.2px 159.9px,929.4px 159.3px,927.5px 157.5px,924.9px 155.8px,923.5px 152.9px,920.4px 151.7px,918.6px 149.2px,916.8px 146.7px,914.7px 149.5px,912.2px 151.3px,910.5px 153.9px,907.7px 155.4px,904.9px 155.7px,902.1px 156.5px,899.1px 156.5px,896.9px 155.8px,895.1px 153.7px,892.9px 152.3px,890.1px 153.1px,887.4px 154.1px,884.6px 154.3px,881.8px 155.0px,879.1px 155.1px,876.2px 154.4px,873.2px 154.7px,870.4px 153.9px,867.6px 154.0px,864.7px 153.6px,861.8px 153.9px,859.0px 154.8px,856.1px 154.7px,853.3px 154.8px,850.8px 156.3px,848.0px 156.2px,845.4px 157.2px,842.7px 154.9px,839.9px 155.2px,836.6px 154.1px,833.4px 155.1px,832.7px 157.3px,831.5px 160.0px,828.1px 159.3px,824.8px 160.5px,821.6px 160.0px,818.9px 160.1px,816.1px 159.9px,813.5px 160.2px,810.7px 160.5px,807.2px 159.9px,803.8px 158.3px,801.6px 156.3px,800.1px 153.7px,798.1px 151.6px,794.5px 152.3px,791.4px 151.9px,788.3px 151.5px,785.3px 151.2px,782.4px 151.2px,779.4px 151.4px,776.5px 152.2px,773.6px 152.9px,770.6px 152.7px,767.6px 153.1px,764.7px 153.0px,761.7px 152.5px,758.8px 153.1px,755.9px 153.5px,752.9px 153.5px,750.0px 153.5px,747.3px 154.5px,744.5px 153.2px,741.8px 153.4px,739.0px 153.2px,736.3px 153.4px,733.5px 154.0px,730.8px 154.0px,728.0px 154.4px,725.3px 153.6px,723.2px 155.6px,720.9px 156.8px,718.4px 157.8px,714.9px 157.3px,711.7px 156.4px,708.4px 156.3px,705.9px 153.7px,704.0px 151.2px,701.9px 148.9px,699.2px 147.5px,696.0px 146.9px,694.0px 148.1px,692.5px 150.6px,691.3px 153.2px,689.5px 155.4px,687.6px 157.5px,684.8px 155.8px,682.2px 154.3px,680.4px 151.7px,678.0px 149.7px,674.8px 150.1px,672.1px 149.8px,669.2px 150.1px,666.5px 149.9px,663.7px 149.2px,660.9px 149.1px,658.2px 148.0px,655.1px 150.2px,652.0px 151.6px,648.3px 151.5px,646.6px 150.3px,644.2px 148.9px,642.6px 146.7px,640.1px 145.5px,636.2px 142.4px,633.3px 144.5px,631.4px 147.1px,629.6px 149.7px,628.2px 152.5px,626.1px 154.8px,624.3px 157.2px,621.6px 158.8px,619.9px 161.3px,617.6px 163.2px,615.5px 161.9px,613.2px 160.3px,611.2px 157.0px,608.7px 154.2px,605.6px 154.2px,602.9px 154.2px,600.2px 154.2px,597.6px 154.3px,594.8px 155.5px,592.0px 155.4px,589.2px 156.0px,586.4px 156.8px,583.6px 157.2px,580.8px 156.4px,578.1px 156.0px,575.6px 154.9px,573.0px 154.0px,570.3px 154.4px,567.7px 153.4px,565.1px 152.9px,562.5px 152.6px,559.8px 154.0px,557.2px 154.6px,554.5px 155.1px,551.9px 155.6px,549.2px 156.1px,546.5px 155.9px,543.7px 156.1px,541.1px 156.8px,538.5px 157.9px,536.6px 155.5px,534.8px 153.1px,531.9px 151.6px,529.9px 149.1px,527.5px 146.8px,524.4px 149.2px,522.1px 151.4px,520.0px 153.8px,517.3px 154.9px,514.3px 154.6px,511.6px 155.8px,508.6px 155.8px,505.8px 156.1px,503.1px 157.1px,500.3px 157.2px,497.4px 156.5px,494.6px 156.9px,491.8px 157.9px,488.9px 157.8px,486.1px 157.6px,483.3px 156.3px,480.5px 156.2px,477.6px 157.0px,474.6px 155.6px,471.6px 154.9px,468.4px 154.9px,465.3px 154.9px,462.3px 156.8px,459.7px 159.5px,457.2px 161.5px,453.7px 162.1px,451.3px 164.2px,448.8px 166.2px,447.5px 163.8px,445.2px 162.4px,443.9px 160.0px,442.1px 158.1px,439.7px 156.8px,437.7px 155.0px,435.7px 153.2px,433.5px 151.5px,430.3px 152.4px,426.9px 154.1px,425.0px 155.7px,423.3px 157.7px,420.6px 158.6px,419.3px 161.0px,417.3px 162.7px,415.2px 164.3px,412.6px 163.8px,410.0px 164.5px,407.6px 162.9px,404.7px 162.6px,401.1px 163.5px,397.6px 164.4px,394.5px 164.2px,391.7px 162.8px,388.7px 162.3px,385.7px 160.6px,383.8px 157.8px,382.2px 161.2px,378.2px 159.1px,376.7px 156.6px,374.7px 154.4px,372.7px 152.3px,370.3px 149.8px,367.7px 147.5px,364.8px 147.1px,361.9px 148.0px,359.1px 147.3px,356.2px 147.7px,353.3px 147.7px,350.4px 147.0px,347.6px 147.5px,344.7px 147.5px,342.3px 149.1px,340.1px 150.8px,338.4px 153.2px,336.1px 154.8px,334.1px 156.8px,331.5px 156.7px,328.8px 156.4px,326.2px 156.7px,323.5px 156.5px,320.9px 156.5px,318.2px 155.8px,315.6px 156.1px,312.9px 155.7px,310.3px 155.6px,307.6px 156.5px,305.0px 156.0px,302.7px 158.0px,301.0px 160.4px,300.1px 163.3px,298.3px 165.6px,297.5px 165.3px);">
<div class="abs" style="left:320px;top:95px;width:643px;height:76px;background:#fff;"></div>
<div class="abs" style="left:318px;top:93px;width:663px;height:55px;border-top:1px solid #A3A39C;border-left:1px solid #A3A39C;border-right:2px solid #fff;"></div>
<div class="abs" style="left:319px;top:94px;width:660px;height:54px;border-top:1px solid #75756F;border-left:1px solid #75756F;"></div>
<div class="hd" style="left:320px;top:95px;width:18px;height:18px;line-height:18px;padding-left:2px;"><span class="s"></span></div>
<div class="hd" style="left:338px;top:95px;width:44px;height:18px;line-height:18px;text-align:left;padding-left:2px;"><span class="s">Code</span></div>
<div class="hd" style="left:382px;top:95px;width:249px;height:18px;line-height:18px;text-align:left;padding-left:2px;"><span class="s">Description</span></div>
<div class="hd" style="left:631px;top:95px;width:59px;height:18px;line-height:18px;padding-left:2px;"><span class="s"><span class="lnk">Current</span></span></div>
<div class="hd" style="left:690px;top:95px;width:60px;height:18px;line-height:18px;padding-left:2px;"><span class="s"><span class="lnk">Pending</span></span></div>
<div class="hd" style="left:750px;top:95px;width:59px;height:18px;line-height:18px;padding-left:2px;"><span class="s"><span class="lnk">History</span></span></div>
<div class="hd" style="left:809px;top:95px;width:85px;height:18px;line-height:18px;padding-left:2px;"><span class="s"><span class="lnk">Permanent</span></span></div>
<div class="hd" style="left:894px;top:95px;width:69px;height:18px;line-height:18px;padding-left:2px;"><span class="s">Summary</span></div>
<div class="abs" style="left:338px;top:113px;width:1px;height:35px;background:#BCBCB8;"></div>
<div class="abs" style="left:382px;top:113px;width:1px;height:35px;background:#BCBCB8;"></div>
<div class="abs" style="left:631px;top:113px;width:1px;height:35px;background:#BCBCB8;"></div>
<div class="abs" style="left:690px;top:113px;width:1px;height:35px;background:#BCBCB8;"></div>
<div class="abs" style="left:750px;top:113px;width:1px;height:35px;background:#BCBCB8;"></div>
<div class="abs" style="left:809px;top:113px;width:1px;height:35px;background:#BCBCB8;"></div>
<div class="abs" style="left:894px;top:113px;width:1px;height:35px;background:#BCBCB8;"></div>
<div class="abs" style="left:320px;top:146px;width:643px;height:1px;background:#BCBCB8;"></div>
<div class="t" style="left:341px;top:122px;letter-spacing:-0.1px;">P1420</div>
<div class="t" style="left:385px;top:122px;letter-spacing:-0.05px;">Evaporative Emission Canister Small Leak</div>
<div class="t" style="left:633px;top:122px;width:58px;text-align:center;">X</div>
<div class="t" style="left:692px;top:122px;width:60px;text-align:center;">X</div>
<div class="t" style="left:752px;top:122px;width:59px;text-align:center;">X</div>
<svg style="left:322px;top:123px;" width="14" height="14" viewBox="0 0 14 14"><g fill="#A9CEF3" stroke="#7FAAE6" stroke-width="0.7"><circle cx="7.0" cy="2.9" r="2.5"/><circle cx="10.6" cy="5.0" r="2.5"/><circle cx="10.6" cy="9.0" r="2.5"/><circle cx="7.0" cy="11.1" r="2.5"/><circle cx="3.4" cy="9.0" r="2.5"/><circle cx="3.4" cy="4.9" r="2.5"/></g><circle cx="7" cy="7" r="2.6" fill="#CFE3F8"/><circle cx="7" cy="6.6" r="1" fill="#F4F8FD"/><g fill="#3E63C9"><circle cx="5.2" cy="10.2" r="0.7"/><circle cx="9.3" cy="9.2" r="0.7"/><circle cx="6.2" cy="3.6" r="0.5"/><circle cx="9.6" cy="4.4" r="0.5"/></g></svg>
<div class="abs" style="left:963px;top:96px;width:2px;height:60px;background:#FAF9F6;"></div>
<div class="sb" style="left:965px;top:96px;width:14px;height:60px;"></div>
<div class="abs" style="left:965px;top:110px;width:14px;height:1px;background:#D8D4CC;"></div>
<svg style="left:964px;top:96px;" width="14" height="16" viewBox="0 0 14 16"><path d="M2.5 8.5 L7 4 L11.5 8.5" fill="none" stroke="#4A4A48" stroke-width="2.2"/></svg>
<div class="abs" style="left:983px;top:90px;width:1px;height:60px;background:#3F5C9A;"></div>
<svg style="left:0;top:0;" width="1020" height="523" viewBox="0 0 1020 523"><g transform="translate(932,124)"><line x1="-5.4" y1="7.8" x2="-15.4" y2="21.2" stroke="#1A1A1A" stroke-width="3.8" stroke-linecap="butt"/><line x1="-6.6" y1="7.8" x2="-16" y2="20.2" stroke="#E8E8E8" stroke-width="1.1"/><line x1="-5" y1="9.6" x2="-13.6" y2="21.2" stroke="#8C2A2A" stroke-width="0.8" stroke-dasharray="1 1.2"/><line x1="-4.4" y1="6.6" x2="-6.6" y2="9.6" stroke="#B8962A" stroke-width="3.2"/><ellipse cx="0" cy="0" rx="9" ry="7.7" fill="#CFCFCF" stroke="#D6AC2C" stroke-width="1.5"/><ellipse cx="0" cy="0" rx="9.8" ry="8.5" fill="none" stroke="#B08A1C" stroke-width="0.5" opacity="0.8"/><polygon points="-7.9,1.3 -7,-3 -2.4,-6.2 1.4,-6 1,-4 -3.2,-1.8 -6.8,1.3" fill="#FAFAFA"/><polygon points="-1.1,0.7 5.2,-2.2 7.7,0.3 7,3 3.7,5 -0.2,3.8" fill="#FAFAFA"/></g></svg>
</div>
<div class="abs" style="left:237px;top:250px;width:700px;height:300px;background:#ECE9E1;border-radius:8px 8px 0 0;overflow:hidden;">
<div class="abs" style="left:0;top:0;width:100%;height:26px;background:linear-gradient(180deg,#3F5580 0px,#3F5580 1px,#C3CEE4 1px,#C3CEE4 2px,#9AACCB 2px,#8FA3C4 8px,#7D92B8 18.5px,#6982AC 19px,#647EA8 26px);"></div>
<div class="abs" style="left:0;top:0;width:100%;height:40px;border:1px solid #46608E;border-bottom:0;border-radius:8px 8px 0 0;"></div>
<div class="abs" style="left:0;top:26px;width:3px;height:280px;background:linear-gradient(90deg,#566C96,#4A628F 50%,#425A87);"></div>
<div class="abs" style="right:0;top:26px;width:3px;height:280px;background:linear-gradient(90deg,#6079A6,#4A628F 50%,#3E5684);"></div>
<div class="abs" style="left:3px;top:26px;width:694px;height:1px;background:#3E5682;"></div>
<div class="t" style="left:6.5px;top:7px;font-family:'DejaVu Sans','Liberation Sans',sans-serif;font-weight:bold;font-size:12.5px;color:#FBF8EE;transform:none;letter-spacing:-0.4px;text-shadow:1px 1px 0 rgba(40,60,100,0.45);">Test Results (S308-02)</div>
</div>
<div class="t" style="left:260px;top:298px;">Test Results</div>
<div class="t" style="left:725px;top:298px;">Test Description</div>
<div class="abs" style="left:260px;top:322px;width:450px;height:199px;background:#fff;border-top:2px solid #8E8E86;border-left:2px solid #8E8E86;border-right:2px solid #fff;border-bottom:2px solid #fff;"></div>
<div class="hd" style="left:262px;top:324px;width:127px;height:34px;padding-top:8px;white-space:normal;"><span class="s">Test</span></div>
<div class="hd" style="left:389px;top:324px;width:28px;height:34px;padding-top:8px;white-space:normal;"><span class="s"></span></div>
<div class="hd" style="left:417px;top:324px;width:56px;height:34px;padding-top:8px;white-space:normal;"><span class="s">Result</span></div>
<div class="hd" style="left:473px;top:324px;width:56px;height:34px;padding-top:8px;white-space:normal;"><span class="s">Min</span></div>
<div class="hd" style="left:529px;top:324px;width:56px;height:34px;padding-top:8px;white-space:normal;"><span class="s">Max</span></div>
<div class="hd" style="left:585px;top:324px;width:60px;height:34px;padding-top:0px;line-height:16px;padding-right:2px;white-space:normal;"><span class="s">Test<br>Value</span></div>
<div class="hd" style="left:645px;top:324px;width:47px;height:34px;padding-top:8px;white-space:normal;"><span class="s">Unit</span></div>
<div class="abs" style="left:262px;top:411px;width:430px;height:17px;background:#0000FF;"></div>
<div class="t" style="left:265px;top:360px;line-height:16px;">PURGE VSV<br>OPENED</div>
<div class="t" style="left:417px;top:368px;width:56px;text-align:center;">Pass</div>
<div class="t" style="left:473px;top:368px;width:56px;text-align:center;">0.000</div>
<div class="t" style="left:529px;top:368px;width:56px;text-align:center;">0.000</div>
<div class="t" style="left:585px;top:368px;width:60px;text-align:center;">0.000</div>
<div class="t" style="left:645px;top:368px;width:47px;text-align:center;">kPa</div>
<div class="abs" style="left:262px;top:392px;width:430px;height:1px;background:#BCBCB8;"></div>
<div class="abs" style="left:265px;top:393px;width:123px;height:17px;overflow:hidden;"><div class="t" style="left:0;top:1px;letter-spacing:0.1px;">PURGE FLOW</div></div>
<div class="t" style="left:417px;top:394px;width:56px;text-align:center;">Pass</div>
<div class="t" style="left:473px;top:394px;width:56px;text-align:center;">0.000</div>
<div class="t" style="left:529px;top:394px;width:56px;text-align:center;">32.767</div>
<div class="t" style="left:585px;top:394px;width:60px;text-align:center;">0.000</div>
<div class="t" style="left:645px;top:394px;width:47px;text-align:center;">kPa</div>
<div class="abs" style="left:262px;top:410px;width:430px;height:1px;background:#BCBCB8;"></div>
<div class="abs" style="left:265px;top:411px;width:123px;height:17px;overflow:hidden;"><div class="t" style="left:0;top:1px;color:#fff;letter-spacing:0.1px;">CNST SMALL LEAK</div></div>
<div class="t" style="left:417px;top:412px;width:56px;text-align:center;color:#fff;">Fail</div>
<div class="t" style="left:473px;top:412px;width:56px;text-align:center;color:#fff;">0.000</div>
<div class="t" style="left:529px;top:412px;width:56px;text-align:center;color:#fff;">32.767</div>
<div class="t" style="left:585px;top:412px;width:60px;text-align:center;color:#fff;">-0.902</div>
<div class="t" style="left:645px;top:412px;width:47px;text-align:center;color:#fff;">kPa</div>
<div class="abs" style="left:262px;top:428px;width:430px;height:1px;background:#BCBCB8;"></div>
<div class="abs" style="left:265px;top:429px;width:123px;height:17px;overflow:hidden;"><div class="t" style="left:0;top:1px;letter-spacing:0.1px;">CNST GROSS LEAK</div></div>
<div class="t" style="left:417px;top:430px;width:56px;text-align:center;">Pass</div>
<div class="t" style="left:473px;top:430px;width:56px;text-align:center;">0.000</div>
<div class="t" style="left:529px;top:430px;width:56px;text-align:center;">0.000</div>
<div class="t" style="left:585px;top:430px;width:60px;text-align:center;">0.000</div>
<div class="t" style="left:645px;top:430px;width:47px;text-align:center;">kPa</div>
<div class="abs" style="left:262px;top:446px;width:430px;height:1px;background:#BCBCB8;"></div>
<div class="abs" style="left:265px;top:447px;width:123px;height:17px;overflow:hidden;"><div class="t" style="left:0;top:1px;letter-spacing:0.1px;">TANK SMALL LEAK</div></div>
<div class="t" style="left:417px;top:448px;width:56px;text-align:center;">Pass</div>
<div class="t" style="left:473px;top:448px;width:56px;text-align:center;">0.000</div>
<div class="t" style="left:529px;top:448px;width:56px;text-align:center;">32.767</div>
<div class="t" style="left:585px;top:448px;width:60px;text-align:center;">8.536</div>
<div class="t" style="left:645px;top:448px;width:47px;text-align:center;">kPa</div>
<div class="abs" style="left:262px;top:464px;width:430px;height:1px;background:#BCBCB8;"></div>
<div class="abs" style="left:265px;top:465px;width:123px;height:17px;overflow:hidden;"><div class="t" style="left:0;top:1px;letter-spacing:0.1px;">TANK GROSS LEAK</div></div>
<div class="t" style="left:417px;top:466px;width:56px;text-align:center;">Pass</div>
<div class="t" style="left:473px;top:466px;width:56px;text-align:center;">0.000</div>
<div class="t" style="left:529px;top:466px;width:56px;text-align:center;">32.767</div>
<div class="t" style="left:585px;top:466px;width:60px;text-align:center;">8.536</div>
<div class="t" style="left:645px;top:466px;width:47px;text-align:center;">kPa</div>
<div class="abs" style="left:262px;top:482px;width:430px;height:1px;background:#BCBCB8;"></div>
<div class="abs" style="left:265px;top:483px;width:123px;height:17px;overflow:hidden;"><div class="t" style="left:0;top:1px;letter-spacing:0.1px;">TANK CLS VAL CL</div></div>
<div class="t" style="left:417px;top:484px;width:56px;text-align:center;">Pass</div>
<div class="t" style="left:473px;top:484px;width:56px;text-align:center;">0.000</div>
<div class="t" style="left:529px;top:484px;width:56px;text-align:center;">0.000</div>
<div class="t" style="left:585px;top:484px;width:60px;text-align:center;">0.000</div>
<div class="t" style="left:645px;top:484px;width:47px;text-align:center;">kPa</div>
<div class="abs" style="left:262px;top:500px;width:430px;height:1px;background:#BCBCB8;"></div>
<div class="abs" style="left:265px;top:501px;width:123px;height:17px;overflow:hidden;"><div class="t" style="left:0;top:1px;letter-spacing:0.1px;">TANK CLS VAL OP</div></div>
<div class="t" style="left:417px;top:502px;width:56px;text-align:center;">Pass</div>
<div class="t" style="left:473px;top:502px;width:56px;text-align:center;">0.000</div>
<div class="t" style="left:529px;top:502px;width:56px;text-align:center;">32.767</div>
<div class="t" style="left:585px;top:502px;width:60px;text-align:center;">8.531</div>
<div class="t" style="left:645px;top:502px;width:47px;text-align:center;">kPa</div>
<div class="abs" style="left:262px;top:518px;width:430px;height:1px;background:#BCBCB8;"></div>
<div class="abs" style="left:388px;top:358px;width:1px;height:161px;background:#BCBCB8;"></div>
<div class="abs" style="left:416px;top:358px;width:1px;height:161px;background:#BCBCB8;"></div>
<div class="abs" style="left:472px;top:358px;width:1px;height:161px;background:#BCBCB8;"></div>
<div class="abs" style="left:528px;top:358px;width:1px;height:161px;background:#BCBCB8;"></div>
<div class="abs" style="left:584px;top:358px;width:1px;height:161px;background:#BCBCB8;"></div>
<div class="abs" style="left:644px;top:358px;width:1px;height:161px;background:#BCBCB8;"></div>
<div class="abs" style="left:472px;top:411px;width:57px;height:17px;border:1px solid #E4DA20;"></div>
<div class="abs" style="left:692px;top:324px;width:1px;height:195px;background:#fff;"></div>
<div class="abs" style="left:693px;top:324px;width:15px;height:195px;background:#FDFDFC;"></div>
<div class="sb" style="left:693px;top:324px;width:15px;height:16px;border:1px solid #E2DFD8;"></div>
<div class="sb" style="left:693px;top:418px;width:15px;height:86px;border-top:1px solid #D6D2CA;border-bottom:1px solid #D6D2CA;"></div>
<div class="sb" style="left:693px;top:504px;width:15px;height:15px;border:1px solid #E2DFD8;"></div>
<svg style="left:693px;top:324px;" width="15" height="195" viewBox="0 0 15 195"><path d="M3 10 L7.5 5.5 L12 10" fill="none" stroke="#3A3A38" stroke-width="2.3"/><path d="M3 184.5 L7.5 189 L12 184.5" fill="none" stroke="#3A3A38" stroke-width="2.3"/><path d="M4 133.5H11M4 135.5H11M4 137.5H11M4 139.5H11" stroke="#A9A69E" stroke-width="1"/></svg>
<div class="abs" style="left:725px;top:322px;width:200px;height:199px;background:#ECE9E1;border-top:2px solid #8E8E86;border-left:2px solid #8E8E86;border-right:2px solid #fff;border-bottom:2px solid #fff;"></div>
<div class="abs" style="left:908px;top:324px;width:15px;height:195px;background:#FDFDFC;border-left:1px solid #E6E3DC;"></div>
<div class="abs" style="left:908px;top:324px;width:15px;height:16px;background:#F6F5F1;border:1px solid #E2DFD8;"></div>
<div class="abs" style="left:908px;top:504px;width:15px;height:15px;background:#F6F5F1;border:1px solid #E2DFD8;"></div>
<svg style="left:908px;top:324px;" width="15" height="195" viewBox="0 0 15 195"><path d="M3.5 10 L7.5 6 L11.5 10" fill="none" stroke="#D2CFC8" stroke-width="2"/><path d="M3.5 185 L7.5 189 L11.5 185" fill="none" stroke="#D2CFC8" stroke-width="2"/></svg>
<div class="abs" style="left:725px;top:522px;width:209px;height:1px;background:#fff;"></div>
</body></html>
